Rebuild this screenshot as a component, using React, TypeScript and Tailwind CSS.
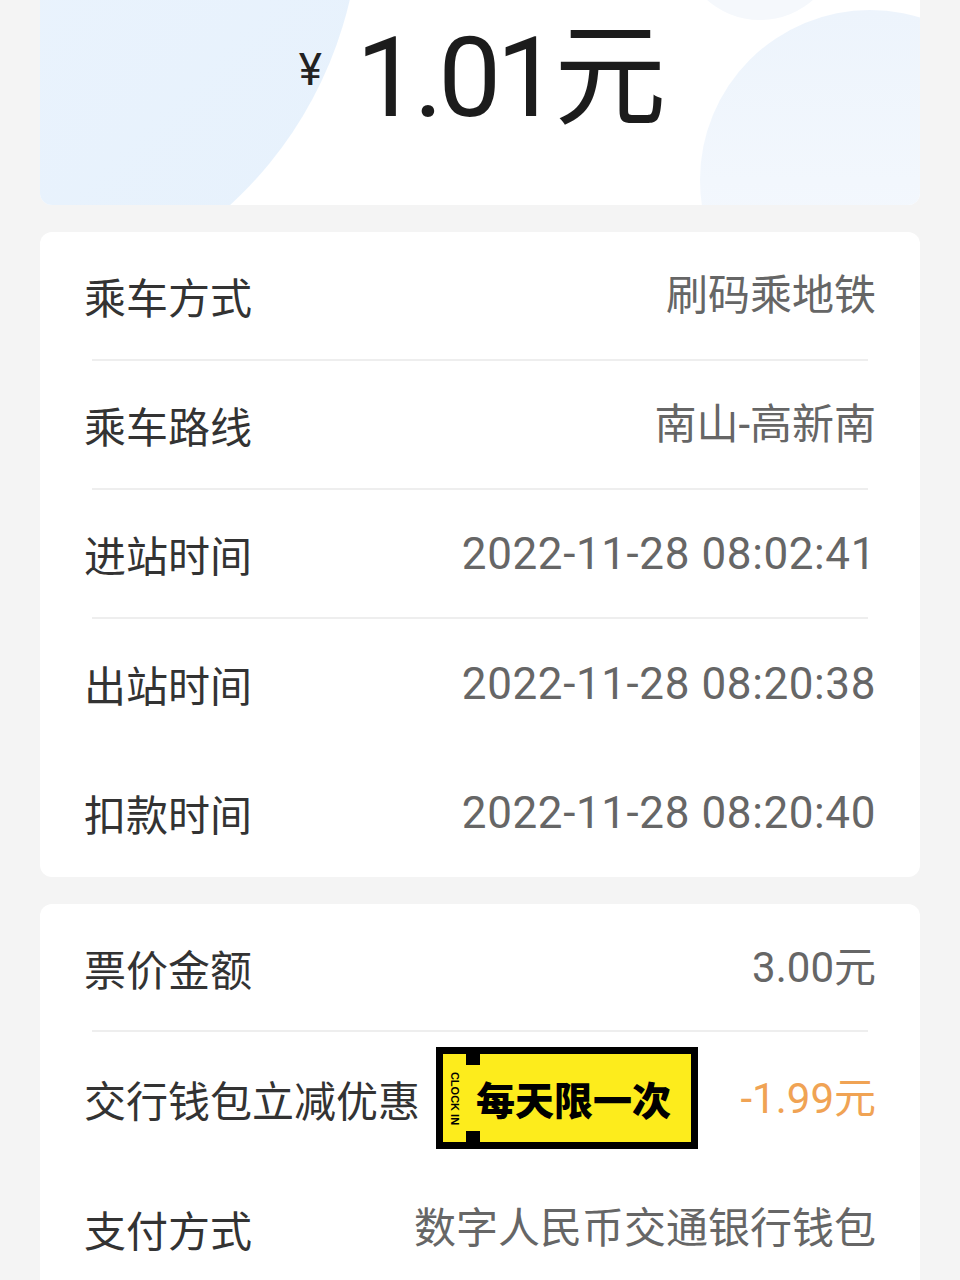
import React from 'react';

const cjk = '"Noto Sans CJK SC", sans-serif';
const num = 'Roboto, "Noto Sans CJK SC", sans-serif';

type Row = { label: string; value: string; divider?: boolean };

const tripRows: Row[] = [
  { label: '乘车方式', value: '刷码乘地铁', divider: true },
  { label: '乘车路线', value: '南山-高新南', divider: true },
  { label: '进站时间', value: '2022-11-28 08:02:41', divider: true },
  { label: '出站时间', value: '2022-11-28 08:20:38' },
  { label: '扣款时间', value: '2022-11-28 08:20:40' },
];

function ClockInBadge() {
  return (
    <div className="relative ml-4 flex h-[102px] w-[262px] bg-black p-[7px]">
      <div className="flex h-full w-[24px] items-center justify-center bg-[#fdec1c]">
        <span
          className="rotate-90 whitespace-nowrap text-[11px] font-bold leading-none text-black"
          style={{ fontFamily: 'Liberation Sans, sans-serif' }}
        >
          CLOCK IN
        </span>
      </div>
      <div className="flex flex-1 items-center bg-[#fdec1c] pl-[9px]">
        <span className="text-[39px] font-black leading-none text-black" style={{ fontFamily: cjk }}>
          每天限一次
        </span>
      </div>
      {/* ticket notches */}
      <div className="absolute left-[30px] top-[6px] h-[12px] w-[14px] bg-black" />
      <div className="absolute bottom-[6px] left-[30px] h-[12px] w-[14px] bg-black" />
    </div>
  );
}

function Value({ text, color = 'text-[#666]' }: { text: string; color?: string }) {
  // long timestamps render a bit wider in the screenshot
  if (/\d/.test(text) && text.length > 10) {
    return <span className={`text-[44px] tracking-[0.6px] ${color}`} style={{ fontFamily: num }}>{text}</span>;
  }
  return <span className={`text-[42px] ${color}`} style={{ fontFamily: num }}>{text}</span>;
}

function InfoRow({ row, h = 'h-[129px]' }: { row: Row; h?: string }) {
  return (
    <div className={`flex ${h} flex-col`}>
      <div className="flex flex-1 items-center justify-between">
        <span className="text-[42px] text-[#333]" style={{ fontFamily: cjk }}>{row.label}</span>
        <Value text={row.value} />
      </div>
      {row.divider && <div className="mx-2 h-[2px] bg-[#eeeeee]" />}
    </div>
  );
}

export default function App() {
  return (
    <div className="flex min-h-[1280px] flex-col gap-[27px] bg-[#f4f4f4] px-10">
      {/* amount card */}
      <div className="relative h-[205px] overflow-hidden rounded-b-[12px] bg-white">
        <div className="absolute left-[-480px] top-[-490px] h-[800px] w-[800px] rounded-full bg-gradient-to-br from-[#f4f8fd] via-[#eaf3fd] to-[#e6f1fc]" />
        <div className="absolute left-[660px] top-[10px] h-[340px] w-[340px] rounded-full bg-gradient-to-b from-[#edf4fc] to-[#f7fafe]" />
        <div className="absolute left-[640px] top-[-140px] h-[160px] w-[160px] rounded-full bg-[#f5f8fc]" />
        <div className="relative flex items-start justify-center pt-[22px]">
          <span className="mr-[34px] mt-[26px] text-[44px] leading-none text-[#222]" style={{ fontFamily: num }}>¥</span>
          <span className="text-[112px] leading-none tracking-[-5px] text-[#1c1c1c]" style={{ fontFamily: num }}>
            1.01元
          </span>
        </div>
      </div>

      {/* trip card */}
      <div className="rounded-[12px] bg-white px-11">
        {tripRows.map((r) => (
          <InfoRow key={r.label} row={r} />
        ))}
      </div>

      {/* payment card */}
      <div className="rounded-t-[12px] bg-white px-11 pb-10">
        <InfoRow row={{ label: '票价金额', value: '3.00元', divider: true }} h="h-[128px]" />
        <div className="flex h-[132px] items-center">
          <span className="text-[42px] text-[#333]" style={{ fontFamily: cjk }}>交行钱包立减优惠</span>
          <ClockInBadge />
          <span className="ml-auto">
            <Value text="-1.99元" color="text-[#f0a354]" />
          </span>
        </div>
        <InfoRow row={{ label: '支付方式', value: '数字人民币交通银行钱包' }} h="h-[128px]" />
      </div>
    </div>
  );
}
